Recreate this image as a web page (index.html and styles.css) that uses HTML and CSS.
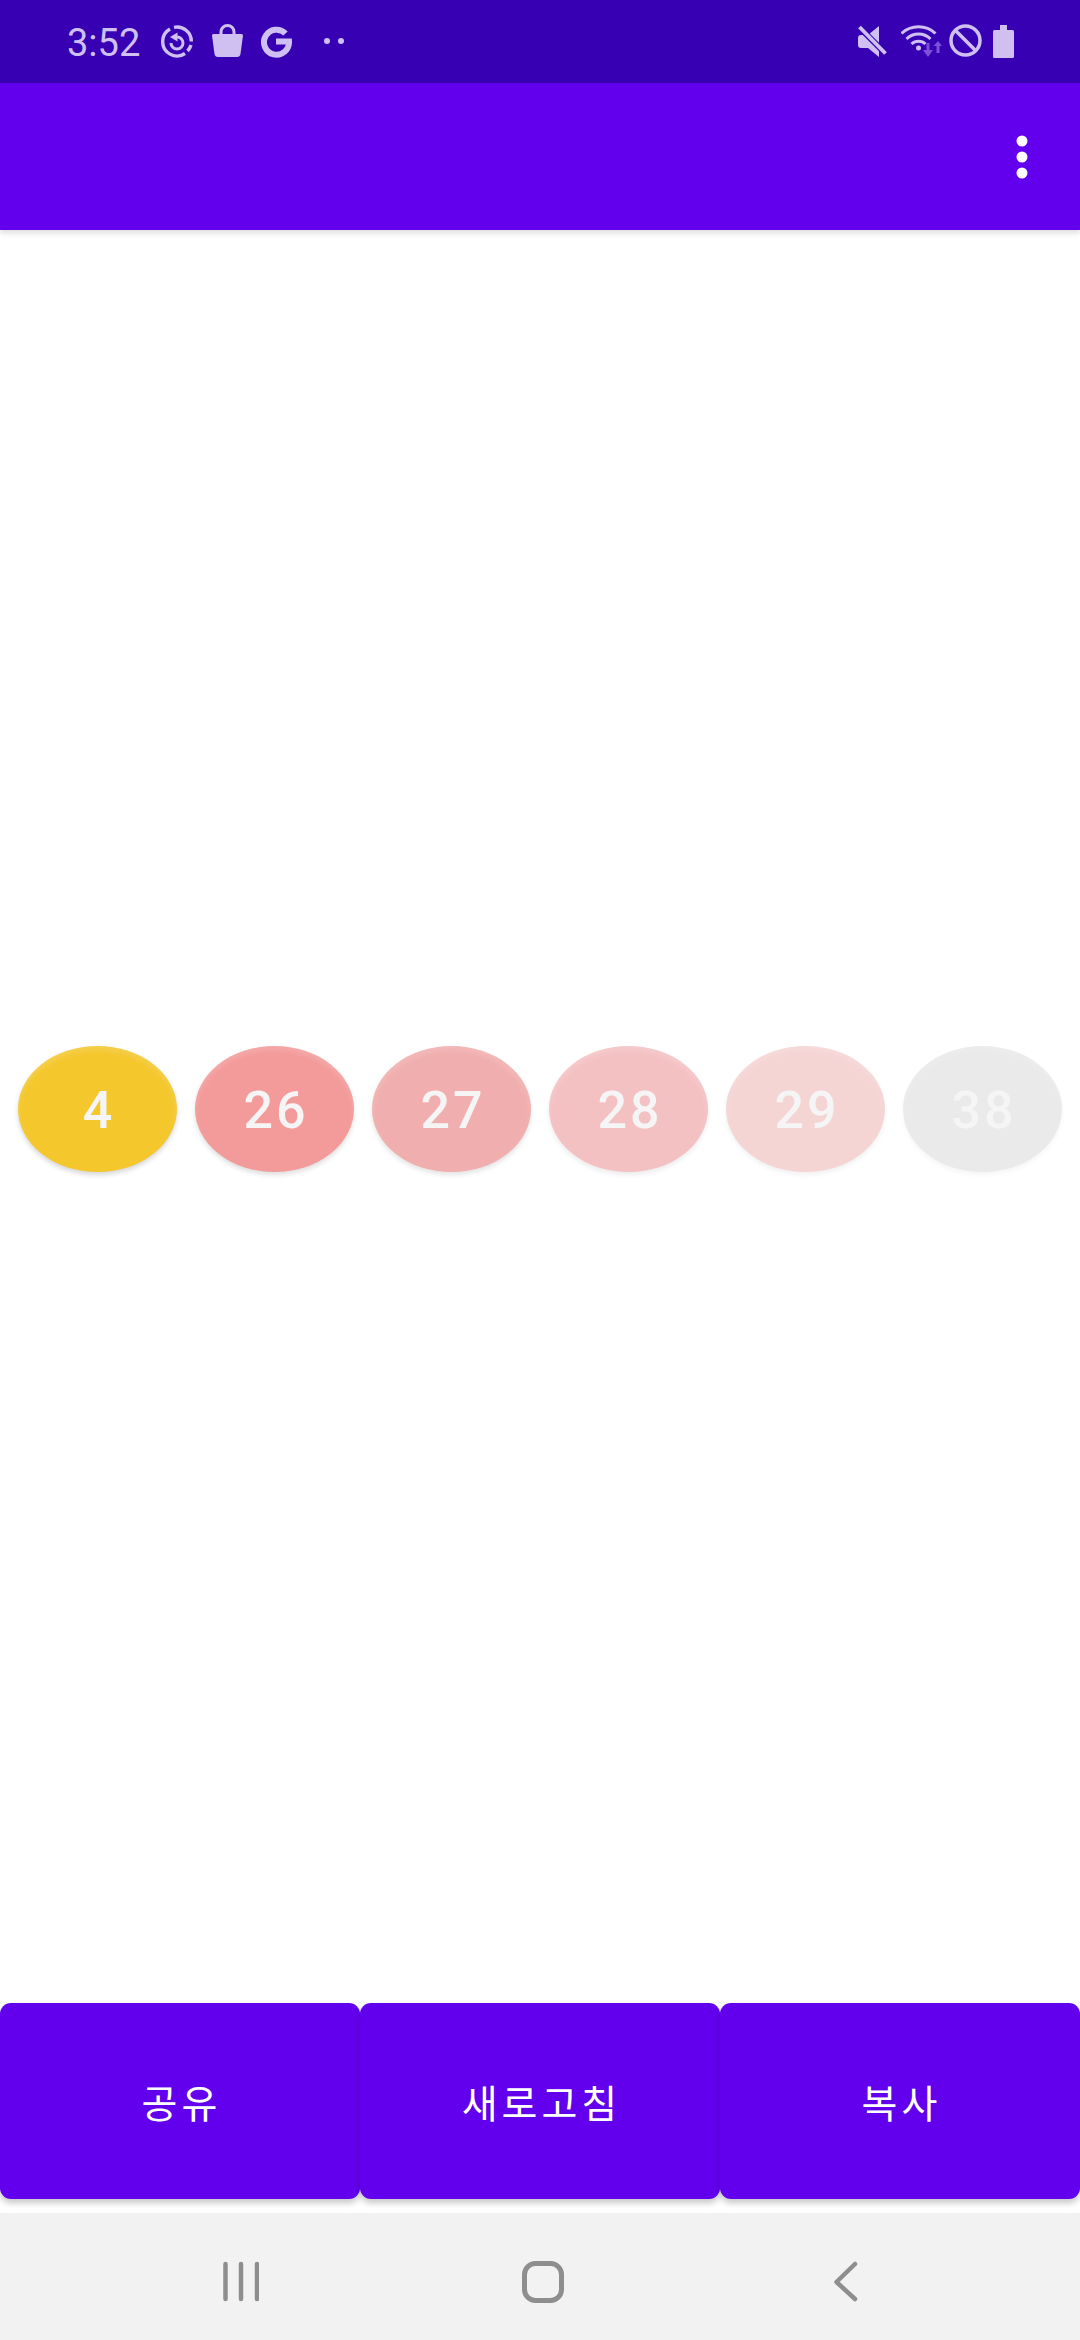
FILE: index.html
```html
<!DOCTYPE html>
<html lang="ko">
<head>
<meta charset="utf-8">
<title>번호</title>
<link rel="stylesheet" href="styles.css">
</head>
<body>
<div class="screen">
  <header class="status">
    <div class="status-group">
      <span class="time">3:52</span>
      <svg class="ic ic-sync" width="32" height="34" viewBox="0 0 32 34"><g fill="none" stroke="currentColor" stroke-width="3.4"><path d="M13 3.300A14.300 14.300 0 0 1 30.300 17.500"/><path d="M30 21A14.300 14.300 0 0 1 26.500 27"/><path d="M24 29.500A14.300 14.300 0 0 1 1.700 17A14.300 14.300 0 0 1 9 5"/><path stroke-width="3" d="M16 13A6 6 0 1 1 10 19"/></g><path fill="currentColor" d="M16.500 8.500V17.500L9 13Z"/></svg>
      <svg class="ic ic-bag" width="31" height="34" viewBox="0 0 31 34"><path fill="currentColor" d="M1.500 10H29.500Q31 10 31 11.500L28.500 30Q28 33 25 33H6Q3 33 2.500 30L0 11.500Q0 10 1.500 10Z"/><path fill="none" stroke="currentColor" stroke-width="3" d="M9 11V8A6.500 6.500 0 0 1 22 8V11"/></svg>
      <svg class="ic ic-g" width="31" height="34" viewBox="0 0 31 34"><path fill="none" stroke="currentColor" stroke-width="6" d="M24.500 9.500A12.500 12.500 0 1 0 28 17.500H15"/></svg>
      <svg class="ic ic-dots" width="20" height="34" viewBox="0 0 20 34"><circle cx="3" cy="17" r="3" fill="currentColor"/><circle cx="17" cy="17" r="3" fill="currentColor"/></svg>
    </div>
    <div class="status-group">
      <svg class="ic" width="29" height="34" viewBox="0 0 29 34"><path fill="currentColor" d="M21 2V33L10 24H3Q0 24 0 21V14Q0 11 3 11H10Z"/><path fill="none" stroke="#3700b3" stroke-width="6" d="M0 2L30 32"/><path fill="none" stroke="currentColor" stroke-width="3.800" d="M1.500 3L27.500 29.500"/></svg>
      <svg class="ic ic-wifi" width="41" height="34" viewBox="0 0 41 34"><g fill="none" stroke="currentColor" stroke-width="3"><path d="M0.500 9.500A25 25 0 0 1 34.500 9.500"/><path d="M5.500 15A17 17 0 0 1 29.500 15"/><path d="M10.500 20A10 10 0 0 1 24.500 20"/></g><circle cx="17.500" cy="24" r="2.500" fill="currentColor"/><g fill="#7d50dc"><path d="M25.500 19H28.500V26H32L27 33L22 26H25.500Z"/><path d="M35.500 29H38.500V22H41L37 17L32.500 22H35.500Z"/></g></svg>
      <svg class="ic ic-block" width="33" height="34" viewBox="0 0 33 34"><circle cx="16.500" cy="16.500" r="14.500" fill="none" stroke="currentColor" stroke-width="3.500"/><path d="M6.500 6.500L26.500 26.500" stroke="currentColor" stroke-width="3.500"/></svg>
      <svg class="ic ic-batt" width="21" height="34" viewBox="0 0 21 34"><path fill="currentColor" d="M7 1H14V6H19.500Q21 6 21 7.500V32.500Q21 34 19.500 34H1.500Q0 34 0 32.500V7.500Q0 6 1.500 6H7Z"/></svg>
    </div>
  </header>

  <div class="appbar">
    <svg class="menu" width="12" height="44" viewBox="0 0 12 44"><circle cx="6" cy="6" r="5.500"/><circle cx="6" cy="22" r="5.500"/><circle cx="6" cy="38" r="5.500"/></svg>
  </div>

  <main class="main">
    <div class="balls">
      <div class="ball ball-a">4</div>
      <div class="ball ball-b">26</div>
      <div class="ball ball-c">27</div>
      <div class="ball ball-d">28</div>
      <div class="ball ball-e">29</div>
      <div class="ball ball-f">38</div>
    </div>
  </main>

  <div class="actions">
    <button class="action">공유</button>
    <button class="action">새로고침</button>
    <button class="action">복사</button>
  </div>

  <nav class="navbar">
    <svg class="nav-ic" width="36" height="44" viewBox="0 0 36 44"><g stroke="#8e8e8e" stroke-width="4.500" stroke-linecap="round"><path d="M2.500 4V39"/><path d="M18 4V39"/><path d="M34 4V39"/></g></svg>
    <svg class="nav-ic nav-home" width="42" height="44" viewBox="0 0 42 44"><rect x="2.500" y="3.500" width="37" height="37" rx="11" fill="none" stroke="#8e8e8e" stroke-width="5"/></svg>
    <svg class="nav-ic nav-back" width="26" height="44" viewBox="0 0 26 44"><path d="M22 4L3.500 22L22 39" fill="none" stroke="#8e8e8e" stroke-width="4.500" stroke-linecap="round" stroke-linejoin="round"/></svg>
  </nav>
</div>
</body>
</html>
```
FILE: styles.css
```css
* { box-sizing: border-box; }
html, body { margin: 0; padding: 0; background: #fff; }
.screen {
  width: 1080px;
  height: 2340px;
  display: flex;
  flex-direction: column;
  overflow: hidden;
  font-family: Roboto, "Noto Sans CJK KR", sans-serif;
}
.status {
  height: 83px;
  flex: none;
  background: #3700b3;
  color: #cfc0f1;
  display: flex;
  align-items: center;
  justify-content: space-between;
  padding: 0 66px 1px 67px;
}
.status-group { display: flex; align-items: center; }
.time { font-size: 38px; line-height: 34px; width: 73px; margin-top: 4px; }
.ic { display: block; flex: none; }
.ic-sync { margin-left: 21px; }
.ic-bag { margin-left: 19px; }
.ic-g { margin-left: 18px; }
.ic-dots { margin-left: 32px; }
.ic-wifi { margin-left: 14px; }
.ic-block { margin-left: 7px; }
.ic-batt { margin-left: 11px; }

.appbar {
  height: 147px;
  flex: none;
  background: #6200ee;
  display: flex;
  align-items: center;
  justify-content: flex-end;
  padding-right: 52px;
  box-shadow: 0 3px 6px rgba(0, 0, 0, .14);
}
.menu { display: block; fill: #fff; }

.main {
  flex: 1;
  display: flex;
  align-items: center;
  padding-bottom: 15px;
}
.balls {
  width: 100%;
  display: grid;
  grid-template-columns: repeat(6, 1fr);
  gap: 18px;
  padding: 0 18px;
}
.ball {
  height: 126px;
  border-radius: 50%;
  display: flex;
  align-items: center;
  justify-content: center;
  color: #f5f5f5;
  font-size: 52px;
  font-weight: 500;
  letter-spacing: 3px;
  padding: 3px 0 0 3px;
  box-shadow: 0 3px 5px var(--ball-shadow), inset 0 4px 6px rgba(255, 255, 255, .16);
}
.ball-a { background: #f4c72d; --ball-shadow: rgba(0, 0, 0, .16); }
.ball-b { background: #f39a9a; --ball-shadow: rgba(0, 0, 0, .13); }
.ball-c { background: #f1aeae; --ball-shadow: rgba(0, 0, 0, .11); }
.ball-d { background: #f4c1c3; --ball-shadow: rgba(0, 0, 0, .08); }
.ball-e { background: #f5d4d4; --ball-shadow: rgba(0, 0, 0, .06); }
.ball-f { background: #eaeaea; --ball-shadow: rgba(0, 0, 0, .04); }

.actions {
  flex: none;
  display: grid;
  grid-template-columns: repeat(3, 1fr);
  height: 196px;
  margin-bottom: 14px;
}
.action {
  border: 0;
  padding: 0 0 0 3px;
  background: #6200ee;
  color: #fff;
  border-radius: 11px;
  font-family: Roboto, "Noto Sans CJK KR", sans-serif;
  font-size: 39px;
  letter-spacing: 4px;
  box-shadow: 0 4px 6px rgba(0, 0, 0, .22);
}

.navbar {
  flex: none;
  height: 127px;
  background: #f2f2f2;
  display: flex;
  align-items: flex-start;
  padding: 47px 0 0 223px;
}
.nav-ic { display: block; flex: none; }
.nav-home { margin-left: 263px; }
.nav-back { margin-left: 269px; }
```
